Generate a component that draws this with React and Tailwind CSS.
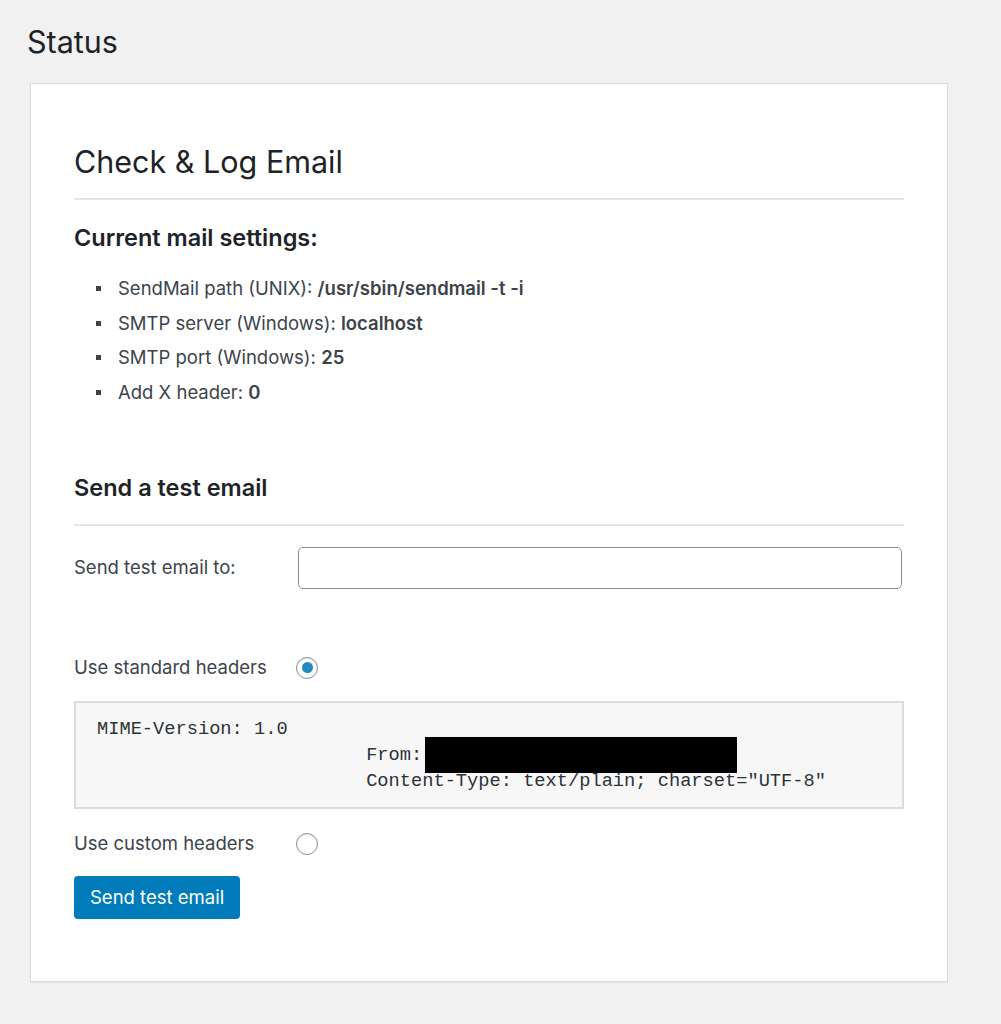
const settings = [
  { label: "SendMail path (UNIX):", value: "/usr/sbin/sendmail -t -i" },
  { label: "SMTP server (Windows):", value: "localhost" },
  { label: "SMTP port (Windows):", value: "25" },
  { label: "Add X header:", value: "0" },
];

const Radio = ({ checked }) => (
  <span className="w-[22px] h-[22px] rounded-full border border-[#8c8f94] bg-white flex items-center justify-center shadow-[inset_0_1px_2px_rgba(0,0,0,0.1)]">
    {checked && <span className="w-[11px] h-[11px] rounded-full bg-[#1e8cbe]" />}
  </span>
);

export default function App() {
  return (
    <div
      className="min-h-screen bg-[#f1f1f1] pt-[22px] pb-[43px] pl-[30px] pr-[53px] text-[#3c434a]"
      style={{ fontFamily: "Inter, 'Noto Sans', sans-serif" }}
    >
      <h1 className="-ml-[3px] text-[30.5px] leading-[40px] text-[#1d2327]">Status</h1>

      <div className="mt-[21px] bg-white border border-[#dcdcde] shadow-[0_1px_1px_rgba(0,0,0,0.04)] px-[43px] pt-[58px] pb-[62px]">
        <h2 className="text-[30.5px] leading-[40px] text-[#1d2327]">Check &amp; Log Email</h2>
        <div className="mt-[16px] border-t-2 border-[#e3e4e6]" />

        <h3 className="mt-[23px] text-[23.5px] leading-[30px] font-semibold text-[#1d2327]">
          Current mail settings:
        </h3>
        <ul className="mt-[18px] text-[18.5px] leading-[34.7px]">
          {settings.map((s) => (
            <li key={s.label} className="flex items-center pl-[22px]">
              <span className="w-[5px] h-[5px] bg-[#3c434a] mr-[17px]" />
              <span>
                {s.label} <b className="font-semibold">{s.value}</b>
              </span>
            </li>
          ))}
        </ul>

        <h3 className="mt-[63px] text-[23.5px] leading-[30px] font-semibold text-[#1d2327]">
          Send a test email
        </h3>
        <div className="mt-[21px] border-t-2 border-[#e3e4e6]" />

        <div className="mt-[21px] flex items-center text-[18.5px]">
          <label className="w-[224px] shrink-0">Send test email to:</label>
          <input
            type="text"
            className="flex-1 mr-[2px] h-[42px] rounded-[5px] border border-[#8c8f94] bg-white px-3 outline-none"
          />
        </div>

        <div className="mt-[67px] flex items-center h-[24px] text-[18.5px]">
          <span className="w-[222px] shrink-0">Use standard headers</span>
          <Radio checked />
        </div>

        <pre
          className="mt-[21px] border-2 border-[#dcdcde] bg-[#f7f7f7] pl-[21px] pt-[13px] pb-[13px] text-[18.7px] leading-[26px] text-[#2c3338]"
          style={{ fontFamily: "'Liberation Mono', 'Courier New', monospace" }}
        >
          {"MIME-Version: 1.0\n"}
          {"                        From:"}
          <span className="inline-block align-middle ml-[3px] w-[312px] h-[36px] -my-[5px] bg-black" />
          {"\n                        Content-Type: text/plain; charset=\"UTF-8\""}
        </pre>

        <div className="mt-[23px] flex items-center h-[24px] text-[18.5px]">
          <span className="w-[222px] shrink-0">Use custom headers</span>
          <Radio />
        </div>

        <button className="mt-[20px] h-[43px] px-[16px] rounded-[4px] bg-[#007cba] text-white text-[18.5px]">
          Send test email
        </button>
      </div>
    </div>
  );
}
